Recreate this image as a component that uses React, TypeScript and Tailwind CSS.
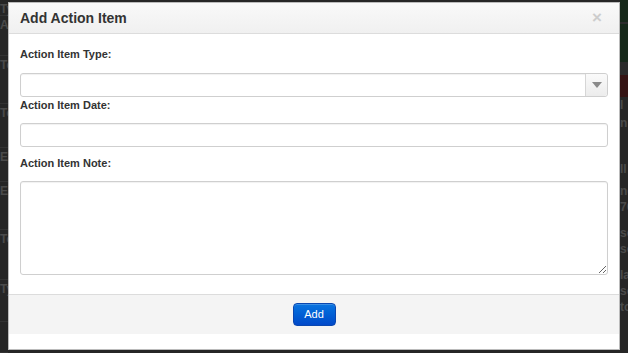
import React from 'react';

const LEFT_ROWS = [
  { h: 16, t: 'Ty' },
  { h: 40, t: 'Ap' },
  { h: 48, t: 'Te' },
  { h: 44, t: 'Te' },
  { h: 34, t: 'Er' },
  { h: 48, t: 'Er' },
  { h: 50, t: 'Te' },
  { h: 42, t: 'Ty' },
  { h: 31, t: '' },
];

const RIGHT_ROWS = [
  { h: 22, cls: 'bg-[#16281a]', t: '' },
  { h: 2, cls: 'bg-[#2c2c2c]', t: '' },
  { h: 38, cls: 'bg-[#16281a]', t: '' },
  { h: 13, cls: 'bg-[#2a2a2a]', t: '' },
  { h: 22, cls: 'bg-[#341313]', t: '' },
  { h: 18, cls: 'bg-[#262626]', t: 'l' },
  { h: 46, cls: 'bg-[#262626]', t: 'n' },
  { h: 22, cls: 'bg-[#262626]', t: 'll' },
  { h: 16, cls: 'bg-[#262626]', t: 'ne' },
  { h: 26, cls: 'bg-[#262626]', t: '76' },
  { h: 16, cls: 'bg-[#262626]', t: 'sc' },
  { h: 26, cls: 'bg-[#262626]', t: 'sc' },
  { h: 16, cls: 'bg-[#262626]', t: 'la' },
  { h: 16, cls: 'bg-[#262626]', t: 'sc' },
  { h: 58, cls: 'bg-[#262626]', t: 'to' },
];

const Label: React.FC<{ children: React.ReactNode; className?: string }> = ({ children, className = '' }) => (
  <label className={`block text-[11px] leading-[16px] font-bold text-[#333] ${className}`}>{children}</label>
);

const App: React.FC = () => {
  return (
    <div className="relative w-[628px] h-[353px] overflow-hidden bg-[#262626] font-['Liberation_Sans',Arial,sans-serif]">
      {/* page behind the backdrop */}
      <div className="flex h-full">
        <div className="w-[8px] overflow-hidden">
          {LEFT_ROWS.map((r, i) => (
            <div
              key={i}
              style={{ height: r.h }}
              className="border-b border-[#333] text-[12px] font-bold leading-[16px] text-[#4a4a4a] whitespace-nowrap pt-[1px]"
            >
              {r.t}
            </div>
          ))}
        </div>
        <div className="flex-1" />
        <div className="w-[8px] overflow-hidden">
          {RIGHT_ROWS.map((r, i) => (
            <div
              key={i}
              style={{ height: r.h }}
              className={`${r.cls} text-[12px] font-bold leading-[16px] text-[#4a4a4a] whitespace-nowrap`}
            >
              {r.t}
            </div>
          ))}
        </div>
      </div>

      {/* modal */}
      <div className="absolute left-[8px] top-[2px] w-[612px] h-[348px] bg-white border border-[#bbb] flex flex-col">
        <div className="h-[31px] flex items-center justify-between pl-[11px] pr-[17px] bg-gradient-to-b from-[#f9f9f9] to-[#f0f0f0] border-b border-[#dcdcdc]">
          <h3 className="text-[14px] font-bold text-[#333] leading-none">Add Action Item</h3>
          <span className="text-[17px] font-bold text-[#cdcdcd] leading-none -mt-[2px]">×</span>
        </div>

        <div className="px-[11px] pt-[12px]">
          <Label>Action Item Type:</Label>
          <div className="mt-[11px] h-[24px] flex border border-[#cfcfcf] rounded-[3px] bg-white shadow-[inset_0_1px_1px_rgba(0,0,0,0.06)]">
            <div className="flex-1" />
            <div className="w-[22px] flex items-center justify-center border-l border-[#d6d6d6] bg-gradient-to-b from-[#fafafa] to-[#ececec] rounded-r-[3px]">
              <svg width="10" height="6" viewBox="0 0 10 6">
                <path d="M0 0 L10 0 L5 6 Z" fill="#8a8a8a" />
              </svg>
            </div>
          </div>

          <Label>Action Item Date:</Label>
          <input
            type="text"
            className="mt-[10px] block w-full h-[24px] border border-[#cfcfcf] rounded-[3px] bg-white shadow-[inset_0_1px_1px_rgba(0,0,0,0.06)] outline-none"
          />

          <Label className="mt-[8px]">Action Item Note:</Label>
          <textarea className="mt-[10px] block w-full h-[94px] border border-[#cfcfcf] rounded-[3px] bg-white shadow-[inset_0_1px_1px_rgba(0,0,0,0.06)] outline-none resize" />
        </div>

        <div className="mt-[19px] h-[40px] flex items-center justify-center bg-[#f4f4f4] border-t border-[#dcdcdc]">
          <button className="w-[43px] h-[23px] rounded-[4px] border border-[#0a47b0] bg-gradient-to-b from-[#0a74e0] to-[#0249c9] text-white text-[11px] leading-none shadow-[inset_0_1px_0_rgba(255,255,255,0.2)]">
            Add
          </button>
        </div>
        <div className="flex-1" />
      </div>
    </div>
  );
};

export default App;
